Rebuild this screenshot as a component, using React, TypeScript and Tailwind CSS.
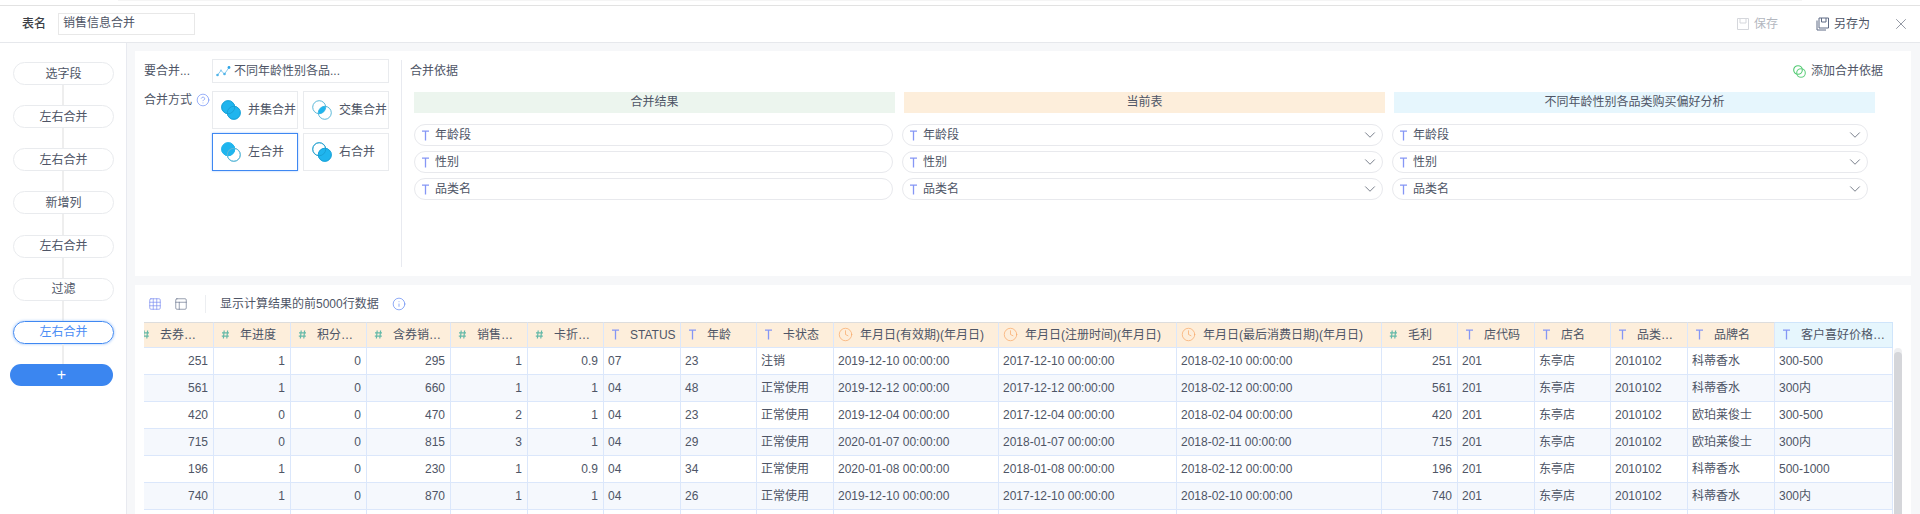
import { ChevronDown, Clock, CircleHelp, Info, X, Grid3x3, PanelsTopLeft } from "lucide-react";

const FONT = "font-['Liberation_Sans','Noto_Sans_CJK_SC',sans-serif]";

function TIcon({ className = "" }: { className?: string }) {
  return (
    <svg width="9" height="11" viewBox="0 0 9 11" className={className} fill="none">
      <path d="M1 1.2H8M4.5 1.2V10.5" stroke="#8596f5" strokeWidth="1.3" />
    </svg>
  );
}

function HashIcon() {
  return (
    <svg width="9" height="11" viewBox="0 0 9 11" fill="none">
      <path d="M3.2 1.5 2.4 9.5M6.6 1.5 5.8 9.5M1 3.9H8M.8 7.1H7.8" stroke="#64b9a8" strokeWidth="1.2" />
    </svg>
  );
}

type VennKind = "union" | "inter" | "left" | "right";

function Venn({ kind }: { kind: VennKind }) {
  const blue = "#1fb5ee";
  const line = "#5cb8d8";
  const lens = "M13.64 6.36A6.5 6.5 0 0 1 6.36 13.64 6.5 6.5 0 0 1 13.64 6.36Z";
  const a = kind === "union" || kind === "left";
  const b = kind === "union" || kind === "right";
  return (
    <svg width="20" height="20" viewBox="0 0 20 20" fill="none">
      <circle cx="7.2" cy="7.2" r="6.5" fill={a ? blue : "none"} stroke={a ? blue : line} strokeWidth="1" />
      <circle cx="12.8" cy="12.8" r="6.5" fill={b ? blue : "none"} stroke={b ? blue : line} strokeWidth="1" />
      {kind === "inter" && <path d={lens} fill={blue} />}
      {kind !== "inter" && <circle cx="7.2" cy="7.2" r="6.5" stroke={a && b ? "#189ccf" : a ? blue : "#189ccf"} strokeWidth="0.8" />}
      {kind !== "inter" && <circle cx="12.8" cy="12.8" r="6.5" stroke={a && !b ? line : "#189ccf"} strokeWidth="0.8" />}
    </svg>
  );
}

function SaveIcon({ color, back }: { color: string; back?: boolean }) {
  return (
    <svg width="14" height="14" viewBox="0 0 14 14" fill="none">
      {back && <path d="M1 3.5V13H10" stroke="#5f6b85" strokeWidth="1" />}
      <path
        d={back ? "M3 1H12.5V11H3ZM5.5 1V5H10V1" : "M1.5 1.5H12.5V12.5H1.5ZM4 1.5V6H10V1.5"}
        stroke={color}
        strokeWidth="1"
      />
    </svg>
  );
}

const steps = ["选字段", "左右合并", "左右合并", "新增列", "左右合并", "过滤", "左右合并"];

function Sidebar() {
  return (
    <aside className="w-[127px] shrink-0 bg-white border-r border-[#e8eaf0] pt-[19px]">
      {steps.map((s, i) => {
        const active = i === steps.length - 1;
        return (
          <div key={i}>
            <div
              className={
                active
                  ? "ml-[13px] w-[101px] h-[23px] rounded-full border border-[#3f88f2] shadow-[0_0_3px_#9cc2f8] flex items-center justify-center text-xs text-[#4b8df5]"
                  : "ml-[13px] w-[101px] h-[23px] rounded-full border border-[#e9ebee] flex items-center justify-center text-xs text-[#4e5566]"
              }
            >
              {s}
            </div>
            <div className="ml-[62px] w-[2px] h-[20.17px] bg-[#eeeeee]" />
          </div>
        );
      })}
      <div className="ml-[10px] w-[103px] h-[22px] rounded-full bg-[#3b86f0] flex items-center justify-center text-white text-base leading-none">
        +
      </div>
    </aside>
  );
}

const methods: { label: string; kind: VennKind }[] = [
  { label: "并集合并", kind: "union" },
  { label: "交集合并", kind: "inter" },
  { label: "左合并", kind: "left" },
  { label: "右合并", kind: "right" },
];

function MergeConfig() {
  return (
    <div className="w-[266px] shrink-0 pl-[9px] pt-[8px]">
      <div className="flex items-center h-[24px]">
        <div className="w-[68px] text-xs">要合并...</div>
        <div className="w-[177px] h-[24px] border border-[#e9ebee] flex items-center pl-[3px] gap-[3px] text-xs">
          <svg width="15" height="11" viewBox="0 0 15 11" fill="none">
            <path d="M1.5 9 5 4.5 8.5 8 13 1.5" stroke="#7cc4ea" strokeWidth="0.9" />
            <circle cx="1.5" cy="9" r="1.3" fill="#4fb3e8" />
            <circle cx="5" cy="4.5" r="1.1" fill="#8fcdf0" />
            <circle cx="8.5" cy="8" r="1.3" fill="#4fb3e8" />
            <circle cx="13" cy="1.5" r="1.4" fill="#2fa5e6" />
          </svg>
          <span>不同年龄性别各品...</span>
        </div>
      </div>
      <div className="flex mt-[8px]">
        <div className="w-[68px] flex items-start gap-[4px] text-xs pt-[1px]">
          <span>合并方式</span>
          <CircleHelp size={14} strokeWidth={1.2} className="text-[#6f8ff5] mt-[1px] shrink-0" />
        </div>
        <div className="grid grid-cols-[86px_86px] gap-x-[5px] gap-y-[4px]">
          {methods.map((m) => (
            <div
              key={m.label}
              className={
                m.kind === "left"
                  ? "h-[38px] border border-[#3f88f2] shadow-[0_0_2px_#a9c9f8] flex items-center pl-[8px] gap-[7px] text-xs whitespace-nowrap"
                  : "h-[38px] border border-[#e9ebee] flex items-center pl-[8px] gap-[7px] text-xs whitespace-nowrap"
              }
            >
              <Venn kind={m.kind} />
              <span>{m.label}</span>
            </div>
          ))}
        </div>
      </div>
    </div>
  );
}

const basis = ["年龄段", "性别", "品类名"];

function BasisPill({ label, chevron }: { label: string; chevron: boolean }) {
  return (
    <div className="h-[22px] rounded-full border border-[#e8e9ed] flex items-center pl-[6px] pr-[3px] text-xs">
      {label && <TIcon />}
      <span className="ml-[5px] flex-1">{label}</span>
      {chevron && <ChevronDown size={18} strokeWidth={1} className="text-[#4e5566] shrink-0" />}
    </div>
  );
}

function MergeBasis() {
  return (
    <div className="flex-1 min-w-0 mt-[9px] h-[207px] border-l border-[#e8eaf0] pl-[8px]">
      <div className="flex items-center justify-between h-[22px] pr-[28px] text-xs">
        <span>合并依据</span>
        <span className="flex items-center gap-[5px]">
          <svg width="13" height="13" viewBox="0 0 13 13" fill="none">
            <circle cx="5" cy="5" r="4.3" stroke="#4fc970" strokeWidth="1.1" />
            <circle cx="8" cy="8" r="4.3" stroke="#63cf7f" strokeWidth="1.1" />
          </svg>
          添加合并依据
        </span>
      </div>
      <div className="ml-[4px] mt-[10px] grid grid-cols-[481px_481px_481px] gap-x-[9px] h-[21px] text-xs text-center leading-[21px]">
        <div className="bg-[#ecf5ee]">合并结果</div>
        <div className="bg-[#fdeedb]">当前表</div>
        <div className="bg-[#e6f6fd]">不同年龄性别各品类购买偏好分析</div>
      </div>
      <div className="ml-[4px] mt-[11px] grid grid-cols-[479px_481px_476px] gap-x-[9px] gap-y-[5px]">
        {basis.map((b) => (
          <div key={b} className="contents">
            <BasisPill label={b} chevron={false} />
            <BasisPill label={b} chevron />
            <BasisPill label={b} chevron />
          </div>
        ))}
      </div>
    </div>
  );
}

type Head = { name: string; type: "n" | "t" | "d"; blue?: boolean };

const heads: Head[] = [
  { name: "去券…", type: "n" },
  { name: "年进度", type: "n" },
  { name: "积分…", type: "n" },
  { name: "含券销…", type: "n" },
  { name: "销售…", type: "n" },
  { name: "卡折…", type: "n" },
  { name: "STATUS", type: "t" },
  { name: "年龄", type: "t" },
  { name: "卡状态", type: "t" },
  { name: "年月日(有效期)(年月日)", type: "d" },
  { name: "年月日(注册时间)(年月日)", type: "d" },
  { name: "年月日(最后消费日期)(年月日)", type: "d" },
  { name: "毛利", type: "n" },
  { name: "店代码", type: "t" },
  { name: "店名", type: "t" },
  { name: "品类…", type: "t" },
  { name: "品牌名", type: "t" },
  { name: "客户喜好价格…", type: "t", blue: true },
];

const T0 = " 00:00:00";
const rows: string[][] = [
  ["251", "1", "0", "295", "1", "0.9", "07", "23", "注销", "2019-12-10" + T0, "2017-12-10" + T0, "2018-02-10" + T0, "251", "201", "东亭店", "2010102", "科蒂香水", "300-500"],
  ["561", "1", "0", "660", "1", "1", "04", "48", "正常使用", "2019-12-12" + T0, "2017-12-12" + T0, "2018-02-12" + T0, "561", "201", "东亭店", "2010102", "科蒂香水", "300内"],
  ["420", "0", "0", "470", "2", "1", "04", "23", "正常使用", "2019-12-04" + T0, "2017-12-04" + T0, "2018-02-04" + T0, "420", "201", "东亭店", "2010102", "欧珀莱俊士", "300-500"],
  ["715", "0", "0", "815", "3", "1", "04", "29", "正常使用", "2020-01-07" + T0, "2018-01-07" + T0, "2018-02-11" + T0, "715", "201", "东亭店", "2010102", "欧珀莱俊士", "300内"],
  ["196", "1", "0", "230", "1", "0.9", "04", "34", "正常使用", "2020-01-08" + T0, "2018-01-08" + T0, "2018-02-12" + T0, "196", "201", "东亭店", "2010102", "科蒂香水", "500-1000"],
  ["740", "1", "0", "870", "1", "1", "04", "26", "正常使用", "2019-12-10" + T0, "2017-12-10" + T0, "2018-02-10" + T0, "740", "201", "东亭店", "2010102", "科蒂香水", "300内"],
  ["", "", "", "", "", "", "", "", "", "", "", "", "", "", "", "", "", ""],
];

function DataTable() {
  return (
    <div className="flex-1 min-w-0 overflow-hidden">
      <div className="-ml-[10px] w-max grid grid-cols-[80px_77px_76px_84px_77px_76px_77px_76px_77px_165px_178px_205px_76px_77px_76px_77px_87px_118px] grid-rows-[26px_repeat(7,27px)] text-xs">
        {heads.map((h) => (
          <div
            key={h.name}
            className={
              h.blue
                ? "flex items-center pl-[5px] pb-[1px] bg-[#e6f6fd] border-t border-r border-b border-[#cfe5fb] whitespace-nowrap overflow-hidden"
                : "flex items-center pl-[5px] pb-[1px] bg-[#fdeedb] border-t border-t-[#dddddd] border-r border-r-[#dbe7fb] border-b border-b-[#dbe7fb] whitespace-nowrap overflow-hidden"
            }
          >
            <span className="w-[13px] shrink-0 flex justify-center">
              {h.type === "n" && <HashIcon />}
              {h.type === "t" && <TIcon />}
              {h.type === "d" && <Clock size={15} strokeWidth={1.2} className="text-[#f8ab6c] shrink-0 -mx-[1px]" />}
            </span>
            <span className="ml-[8px]">{h.name}</span>
          </div>
        ))}
        {rows.map((r, ri) =>
          r.map((c, ci) => (
            <div
              key={ri + "-" + ci}
              className={
                (ri % 2 === 1 ? "bg-[#f5f8fd] " : "bg-white ") +
                (heads[ci].type === "n" ? "justify-end pr-[5px] " : "justify-start pl-[4px] ") +
                "flex items-center border-r border-b border-[#dbe7fb] whitespace-nowrap"
              }
            >
              {c}
            </div>
          ))
        )}
      </div>
    </div>
  );
}

export default function App() {
  return (
    <div className={`${FONT} h-[514px] w-[1920px] overflow-hidden flex flex-col bg-white text-[#4e5566] text-xs`}>
      <div className="h-[5px] shrink-0 bg-white pl-[118px] pr-[118px]">
        <div className="h-[1px] bg-[#f5f5f5]" />
      </div>
      <header className="h-[38px] shrink-0 border-t border-b border-t-[#e2e2e2] border-b-[#e6e8ec] flex items-center pl-[22px] pr-[10px]">
        <span className="w-[36px] font-medium text-[#3c3f46]">表名</span>
        <div className="w-[137px] h-[22px] border border-[#e8e8e8] pl-[4px] leading-[18px] text-[#4e5566]">销售信息合并</div>
        <div className="flex-1" />
        <span className="flex items-center gap-[4px] text-[#b3b7bf]">
          <SaveIcon color="#d5d7dc" />
          保存
        </span>
        <span className="flex items-center gap-[4px] ml-[38px]">
          <SaveIcon color="#5f6b85" back />
          另存为
        </span>
        <X size={18} strokeWidth={0.9} className="ml-[22px] text-[#5f6777]" />
      </header>
      <div className="flex-1 min-h-0 flex">
        <Sidebar />
        <main className="flex-1 min-w-0 bg-[#f6f7f9] pt-[8px] pl-[8px] pr-[9px] flex flex-col gap-[9px]">
          <section className="h-[225px] shrink-0 bg-white flex">
            <MergeConfig />
            <MergeBasis />
          </section>
          <section className="flex-1 min-h-0 bg-white pl-[9px]">
            <div className="h-[37px] flex items-center">
              <Grid3x3 size={14} strokeWidth={1.1} className="ml-[4px] text-[#6f82f0]" />
              <PanelsTopLeft size={14} strokeWidth={1.1} className="ml-[12px] text-[#5f6b85]" />
              <div className="ml-[17px] w-px h-[18px] bg-[#eceef1]" />
              <span className="ml-[14px]">显示计算结果的前5000行数据</span>
              <Info size={14} strokeWidth={1.2} className="ml-[13px] text-[#5f86f2]" />
            </div>
            <div className="flex">
              <DataTable />
              <div className="w-[18px] shrink-0 pt-[26px] pl-[1px]">
                <div className="w-[8px] h-[200px] rounded-t-full bg-[#eeeff1] pt-[4px]">
                  <div className="h-full rounded-t-full bg-[#d5d6da]" />
                </div>
              </div>
            </div>
          </section>
        </main>
      </div>
    </div>
  );
}
